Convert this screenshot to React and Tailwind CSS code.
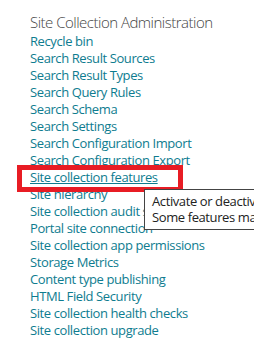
const links = [
  'Recycle bin',
  'Search Result Sources',
  'Search Result Types',
  'Search Query Rules',
  'Search Schema',
  'Search Settings',
  'Search Configuration Import',
  'Search Configuration Export',
  'Site collection features',
  'Site hierarchy',
  'Site collection audit settings',
  'Portal site connection',
  'Site collection app permissions',
  'Storage Metrics',
  'Content type publishing',
  'HTML Field Security',
  'Site collection health checks',
  'Site collection upgrade',
];

export default function App() {
  return (
    <div className="relative w-[254px] h-[351px] overflow-hidden bg-white font-['Open_Sans',sans-serif]">
      <div className="pl-[30px] pt-[12px]">
        <h3 className="text-[15px] leading-[20px] tracking-[-0.5px] font-light text-[#444444] mb-[1px]">
          Site Collection Administration
        </h3>
        <ul className="flex flex-col">
          {links.map(label => (
            <li key={label} className="text-[13px] leading-[17px] tracking-[-0.4px] text-[#0e7c8f] whitespace-nowrap">
              <span className={label === 'Site collection features' ? 'underline' : ''}>{label}</span>
            </li>
          ))}
        </ul>
      </div>

      {/* highlight annotation */}
      <div className="absolute left-[17px] top-[165px] w-[166px] h-[27px] border-[5px] border-[#e81c24]" />

      {/* tooltip */}
      <div className="absolute left-[144px] top-[189px] w-[130px] h-[41px] overflow-hidden bg-white border border-[#444444] px-[7px] pt-[3px] text-[13px] leading-[16px] tracking-[-0.4px] text-[#222222] whitespace-nowrap">
        <div>Activate or deactivate features</div>
        <div>Some features may not apply</div>
      </div>
    </div>
  );
}
